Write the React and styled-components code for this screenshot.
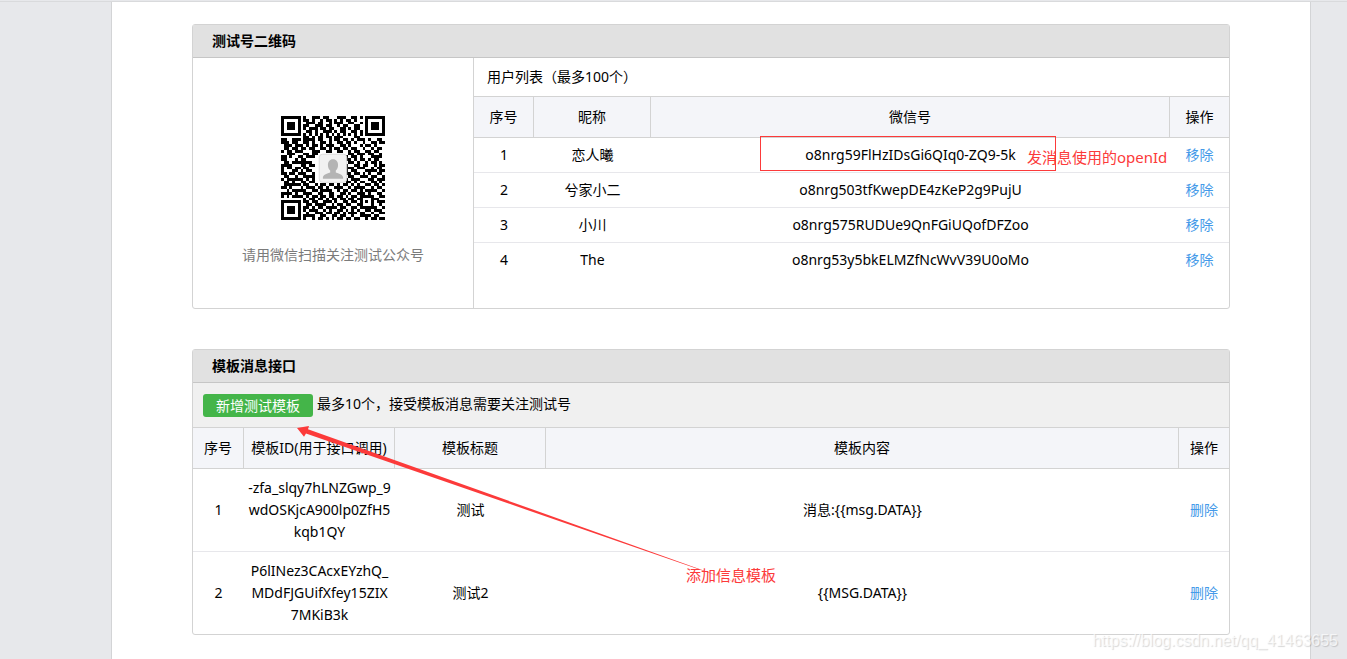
import React from 'react';
import styled, { createGlobalStyle } from 'styled-components';

const GlobalStyle = createGlobalStyle`
  * {
    box-sizing: border-box;
  }

  body {
    margin: 0;
    padding-top: 1px;
    background: #e7e8eb;
    color: #000;
    font-family: "Noto Sans", "Noto Sans CJK SC", sans-serif;
    font-size: 14px;
    line-height: 22px;
  }
`;

const Page = styled.div`
  position: relative;
  display: grid;
  grid-template-columns: minmax(0, 1fr);
  min-height: calc(100vh - 1px);
  padding: 0 36px 0 111px;
  border-top: 1px solid #d9dadc;
`;

const Sheet = styled.main`
  display: flex;
  flex-direction: column;
  gap: 40px;
  padding: 22px 80px 24px;
  background: #fff;
  border-left: 1px solid #d3d4d6;
  border-right: 1px solid #d3d4d6;
`;

const Panel = styled.section`
  position: relative;
  border: 1px solid #d3d3d3;
  border-radius: 3px;
`;

const PanelTitle = styled.h2`
  margin: 0;
  padding: 5px 19px;
  background: #e1e1e1;
  border-bottom: 1px solid #c6c6c6;
  font-size: 14px;
  font-weight: 700;
  line-height: 22px;
`;

const PanelBody = styled.div`
  display: flex;
  min-height: 250px;
`;

const QrSide = styled.div`
  display: flex;
  flex: 0 0 281px;
  flex-direction: column;
  align-items: center;
  gap: 24px;
  padding-top: 58px;
  border-right: 1px solid #d3d3d3;
  color: #7b7b7b;
`;

const UserSide = styled.div`
  flex: 1;
  min-width: 0;
`;

const ListTitle = styled.div`
  padding: 8px 13px;
  border-bottom: 1px solid #d3d3d3;
`;

const Toolbar = styled.div`
  display: flex;
  align-items: flex-start;
  gap: 4px;
  padding: 10px;
  background: #f0f0f0;
  border-bottom: 1px solid #d3d3d3;
`;

const AddButton = styled.button`
  height: 23px;
  margin-top: 1px;
  padding: 0 13px;
  border: 0;
  border-radius: 3px;
  background: #44b549;
  color: #fff;
  font: inherit;
  cursor: pointer;
`;

const Table = styled.table`
  width: 100%;
  border-collapse: separate;
  border-spacing: 0;
  table-layout: fixed;
  text-align: center;
`;

const Col = styled.col`
  width: ${({ $width }) => ($width ? `${$width}px` : 'auto')};
`;

const Th = styled.th`
  padding: 9px 0;
  background: #f4f5f9;
  border-bottom: 1px solid #d3d3d3;
  border-right: 1px solid #d3d3d3;
  font-weight: 400;

  &:last-child {
    border-right: 0;
  }
`;

const Td = styled.td`
  padding: ${({ $tall }) => ($tall ? '8px 1px' : '6px 0')};
  border-bottom: 1px solid #e7e7eb;
  word-break: break-all;

  tr:last-child > & {
    border-bottom: 0;
  }
`;

const Action = styled.a`
  color: #459ae9;
  text-decoration: none;
`;

const Mark = styled.div`
  position: absolute;
  top: 111px;
  right: 173px;
  width: 296px;
  height: 35px;
  border: 1px solid #fc3a3a;
`;

const MarkNote = styled.span`
  position: absolute;
  top: ${({ $top }) => $top}px;
  left: ${({ $left }) => $left}px;
  color: #fc3a3a;
  font-size: 15px;
  white-space: nowrap;
`;

const ArrowSvg = styled.svg`
  position: absolute;
  top: 74px;
  left: 100px;
  pointer-events: none;
`;

const Watermark = styled.div`
  position: absolute;
  right: 9px;
  bottom: 7px;
  color: rgba(255, 255, 255, 0.7);
  font-family: "Liberation Sans", sans-serif;
  font-size: 16px;
  text-shadow: 1px 1px 1px rgba(0, 0, 0, 0.16);
`;

const qrRows = [
  '1111111010011101100011100110101111111',
  '1000001011010010110101011010001000001',
  '1011101001110110010111001100101011101',
  '1011101011001110110010110011001011101',
  '1011101010111011011001101011001011101',
  '1000001001101001110101100110101000001',
  '1111111010101010101010101010101111111',
  '0000000011010110110111000011000000000',
  '1100111011110110010110110101110100110',
  '1110110011010011010011011010010011011',
  '0111011101011010111001101000101101000',
  '0110110110110011010110110110010010110',
  '1011011100011100110011001011001101100',
  '0011100011011000000000001101110110010',
  '1101001101110000000000010110100011110',
  '1100010110000000000000011010110101100',
  '0110111111100000000000001101001011010',
  '1111000110110000000000010011011001011',
  '1011011011000000000000011101110010110',
  '1000110101100000000000010110001111011',
  '1101101110010000000000011011010100110',
  '0110010011110000000000001100111011001',
  '1011111101010000000000010111000110111',
  '0110100110110000000000011010110011010',
  '0111111011001011011010110101001101101',
  '1101000101110110100111001011110010110',
  '0010111110011011110010110110101111001',
  '1111010011100110011001101001110100110',
  '1010111101011011011011010110111110011',
  '0000000010110110101101101101100011100',
  '1111111011011001110100110110101010111',
  '1000001001101111001011011001100010010',
  '1011101011010110111101100110111111001',
  '1011101010111001010011010101001101110',
  '1011101001001110110110101110110010011',
  '1000001011110011001101100100111101100',
  '1111111010010110101011011011001011011',
];

const users = [
  { id: 1, name: '恋人曦', openId: 'o8nrg59FlHzIDsGi6QIq0-ZQ9-5k' },
  { id: 2, name: '兮家小二', openId: 'o8nrg503tfKwepDE4zKeP2g9PujU' },
  { id: 3, name: '小川', openId: 'o8nrg575RUDUe9QnFGiUQofDFZoo' },
  { id: 4, name: 'The', openId: 'o8nrg53y5bkELMZfNcWvV39U0oMo' },
];

const templates = [
  {
    id: 1,
    lines: ['-zfa_slqy7hLNZGwp_9', 'wdOSKjcA900lp0ZfH5', 'kqb1QY'],
    title: '测试',
    content: '消息:{{msg.DATA}}',
  },
  {
    id: 2,
    lines: ['P6lINez3CAcxEYzhQ_', 'MDdFJGUifXfey15ZIX', '7MKiB3k'],
    title: '测试2',
    content: '{{MSG.DATA}}',
  },
];

const qrPath = qrRows
  .map((row, y) => [...row].map((bit, x) => (bit === '1' ? `M${x} ${y}h1v1h-1z` : '')).join(''))
  .join('');

const QrCode = () => (
  <svg width="104" height="104" viewBox="0 0 37 37" role="img" aria-label="二维码">
    <path d={qrPath} fill="#000" shapeRendering="crispEdges" />
    <rect x="13.6" y="13.6" width="9.8" height="10" rx="1.2" fill="#f1f1f1" stroke="#d5d5d5" strokeWidth=".3" />
    <path
      d="M18.5 15.4c-1.2 0-1.8.9-1.8 2 0 .8.3 1.5.8 2v.7c-1.5.5-2.4.7-2.6 1.8v.4h7.2v-.4c-.2-1.1-1.1-1.3-2.6-1.800v-.7c.5-.5.8-1.2.8-2 0-1.100-.6-2-1.800-2z"
      fill="#b4b4b4"
    />
  </svg>
);

const Arrow = () => (
  <ArrowSvg width="460" height="170" viewBox="0 0 460 170" aria-hidden="true">
    <path d="M4 4l12-2-1 3.200L454 162 13 9.500l-2 3.200z" fill="#fc3a3a" />
  </ArrowSvg>
);

const UserTable = () => (
  <Table>
    <colgroup>
      <Col $width={60} />
      <Col $width={117} />
      <Col />
      <Col $width={59} />
    </colgroup>
    <thead>
      <tr>
        <Th>序号</Th>
        <Th>昵称</Th>
        <Th>微信号</Th>
        <Th>操作</Th>
      </tr>
    </thead>
    <tbody>
      {users.map((user) => (
        <tr key={user.id}>
          <Td>{user.id}</Td>
          <Td>{user.name}</Td>
          <Td>{user.openId}</Td>
          <Td><Action href="#remove">移除</Action></Td>
        </tr>
      ))}
    </tbody>
  </Table>
);

const TemplateTable = () => (
  <Table>
    <colgroup>
      <Col $width={51} />
      <Col $width={151} />
      <Col $width={151} />
      <Col />
      <Col $width={50} />
    </colgroup>
    <thead>
      <tr>
        <Th>序号</Th>
        <Th>模板ID(用于接口调用)</Th>
        <Th>模板标题</Th>
        <Th>模板内容</Th>
        <Th>操作</Th>
      </tr>
    </thead>
    <tbody>
      {templates.map((item) => (
        <tr key={item.id}>
          <Td $tall>{item.id}</Td>
          <Td $tall>
            {item.lines.map((line) => <div key={line}>{line}</div>)}
          </Td>
          <Td $tall>{item.title}</Td>
          <Td $tall>{item.content}</Td>
          <Td $tall><Action href="#delete">删除</Action></Td>
        </tr>
      ))}
    </tbody>
  </Table>
);

const App = () => {
  return (
    <>
      <GlobalStyle />
      <Page>
        <Sheet>
          <Panel>
            <PanelTitle>测试号二维码</PanelTitle>
            <PanelBody>
              <QrSide>
                <QrCode />
                <span>请用微信扫描关注测试公众号</span>
              </QrSide>
              <UserSide>
                <ListTitle>用户列表（最多100个）</ListTitle>
                <UserTable />
              </UserSide>
            </PanelBody>
            <Mark>
              <MarkNote $top={9} $left={266}>发消息使用的openId</MarkNote>
            </Mark>
          </Panel>
          <Panel>
            <PanelTitle>模板消息接口</PanelTitle>
            <Toolbar>
              <AddButton type="button">新增测试模板</AddButton>
              <span>最多10个，接受模板消息需要关注测试号</span>
            </Toolbar>
            <TemplateTable />
            <Arrow />
            <MarkNote $top={214} $left={493}>添加信息模板</MarkNote>
          </Panel>
        </Sheet>
        <Watermark>https://blog.csdn.net/qq_41463655</Watermark>
      </Page>
    </>
  );
};

export default App;
